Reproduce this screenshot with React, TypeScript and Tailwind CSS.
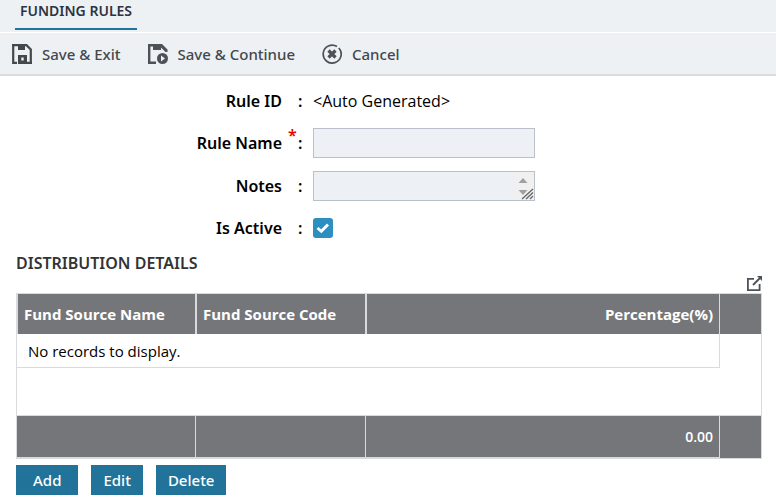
import React from "react";

function SaveExitIcon() {
  return (
    <svg width="20" height="20" viewBox="0 0 20 20" className="shrink-0" aria-hidden="true">
      <path d="M1.2 0V18.8H5M15 18.8H20M0 1.2H14.500L18.8 5.500V18" fill="none" stroke="#43484d" strokeWidth="2.2" />
      <path d="M6 0H13V6H6Z" fill="#43484d" />
      <path d="M6 11H15V20H6Z" fill="#43484d" />
      <path d="M9.300 13.500H11.700V16.500H9.300Z" fill="#eef1f4" />
    </svg>
  );
}

function SaveContinueIcon() {
  return (
    <svg width="20" height="20" viewBox="0 0 20 20" className="shrink-0" aria-hidden="true">
      <path d="M8 18.8H1.2V1.2H6" fill="none" stroke="#4d5258" strokeWidth="2.4" />
      <path d="M5 0H14L19.500 5.500V8H17.500L13 3.500V6H5Z" fill="#4d5258" />
      <circle cx="14.5" cy="14.5" r="5.5" fill="#4d5258" />
      <path d="M13 11.5L17 14.5L13 17.5Z" fill="#eef1f4" />
    </svg>
  );
}

function CancelIcon() {
  return (
    <svg width="20" height="20" viewBox="0 0 20 20" className="shrink-0" aria-hidden="true">
      <path d="M16.8 4A9 9 0 1 1 15 2.5" fill="none" stroke="#4d5258" strokeWidth="1.7" />
      <path d="M6.5 6.5L13.5 13.5M13.5 6.5L6.5 13.5" stroke="#4d5258" strokeWidth="3.2" />
    </svg>
  );
}

function ExportIcon() {
  return (
    <svg width="15" height="15" viewBox="0 0 15 15" aria-hidden="true">
      <path d="M7 2.900H.9V14.1H12.6V8" fill="none" stroke="#4d5258" strokeWidth="1.8" />
      <path d="M6 9L13 2" stroke="#4d5258" strokeWidth="1.8" />
      <path d="M10 0H15V5Z" fill="#4d5258" />
    </svg>
  );
}

function ToolbarButton({ icon, children }: { icon: React.ReactNode; children: React.ReactNode }) {
  return (
    <button type="button" className="flex items-center gap-2.5 text-[15px] leading-5 font-medium text-[#43484d]">
      {icon}
      <span>{children}</span>
    </button>
  );
}

function Field({
  label,
  htmlFor,
  required,
  children,
}: {
  label: string;
  htmlFor?: string;
  required?: boolean;
  children: React.ReactNode;
}) {
  const labelClass = "w-[282px] shrink-0 text-right font-semibold";
  return (
    <div className="flex min-h-7 items-center text-base leading-6">
      {htmlFor ? (
        <label htmlFor={htmlFor} className={labelClass}>
          {label}
        </label>
      ) : (
        <span className={labelClass}>{label}</span>
      )}
      <span className="flex w-[31px] shrink-0 font-semibold">
        <span className="w-4 pl-1.5 leading-2 text-[#e00]">{required ? "*" : ""}</span>
        <span>:</span>
      </span>
      {children}
    </div>
  );
}

function ActionButton({ children, wide }: { children: React.ReactNode; wide?: boolean }) {
  return (
    <button
      type="button"
      className={`h-[30px] bg-[#21739a] text-[15px] leading-5 font-medium text-white ${wide ? "px-[17px]" : "px-3"}`}
    >
      {children}
    </button>
  );
}

export default function App() {
  return (
    <div className="bg-white font-['Noto_Sans','Open_Sans',sans-serif] text-[15px] leading-5 text-black">
      <header className="bg-[#eef1f4]">
        <nav className="flex border-b border-white px-[15px] pb-0.5">
          <a href="#funding" className="border-b-2 border-[#21739a] px-[5px] pt-px pb-[7px] text-sm leading-5 font-semibold text-[#2b3445]">
            FUNDING RULES
          </a>
        </nav>
        <div className="flex h-[43px] items-center gap-[27px] border-b-2 border-[#d9dde1] px-3">
          <ToolbarButton icon={<SaveExitIcon />}>Save &amp; Exit</ToolbarButton>
          <ToolbarButton icon={<SaveContinueIcon />}>Save &amp; Continue</ToolbarButton>
          <ToolbarButton icon={<CancelIcon />}>Cancel</ToolbarButton>
        </div>
      </header>

      <form className="flex flex-col gap-[13px] pt-[11px]">
        <Field label="Rule ID">
          <span className="font-['Open_Sans','Noto_Sans',sans-serif]">&lt;Auto Generated&gt;</span>
        </Field>
        <Field label="Rule Name" htmlFor="rule-name" required>
          <input id="rule-name" type="text" className="h-[30px] w-[222px] border border-[#b9c0cb] bg-[#edf1f5] px-2" />
        </Field>
        <Field label="Notes" htmlFor="notes">
          <span className="relative flex">
            <textarea
              id="notes"
              className="h-[30px] w-[222px] resize-none overflow-hidden border border-[#b9c0cb] bg-[#edf1f5] px-2"
            />
            <svg width="20" height="28" viewBox="0 0 20 28" className="pointer-events-none absolute top-px right-px" aria-hidden="true">
              <path d="M0 0H20V28H0Z" fill="#f0f0f0" />
              <path d="M4.500 11L9 6L13.500 11ZM4.500 18H13.500L9 23Z" fill="#a0a0a0" />
              <path d="M8 27L19 17M12 27L19 20.500M16 27L19 24" stroke="#666" strokeWidth="1.300" />
            </svg>
          </span>
        </Field>
        <Field label="Is Active" htmlFor="is-active">
          <span className="relative flex">
            <input
              id="is-active"
              type="checkbox"
              defaultChecked
              className="peer size-5 appearance-none rounded-[3px] bg-[#9aa3ad] checked:bg-[#2c8fc0]"
            />
            <svg viewBox="0 0 20 20" className="pointer-events-none absolute inset-0 size-5 opacity-0 peer-checked:opacity-100" aria-hidden="true">
              <path d="M4.500 10L8.300 13.300L15 6.500" fill="none" stroke="#fff" strokeWidth="2.800" />
            </svg>
          </span>
        </Field>
      </form>

      <main className="pt-[9px] pr-3.5 pl-4">
        <h2 className="text-base leading-6 font-semibold text-[#333]">DISTRIBUTION DETAILS</h2>
        <div className="flex justify-end pt-px pb-0.5">
          <button type="button" aria-label="Export">
            <ExportIcon />
          </button>
        </div>
        <table className="w-full table-fixed border-separate border-spacing-0 border border-[#d9dadd] text-left font-['Open_Sans','Noto_Sans',sans-serif]">
          <colgroup>
            <col className="w-[179px]" />
            <col className="w-[170px]" />
            <col />
            <col className="w-[41px]" />
          </colgroup>
          <thead>
            <tr className="h-10 bg-[#75767a] font-bold text-white">
              <th className="border-x border-[#d9dadd] px-1.5">Fund Source Name</th>
              <th className="border-x border-[#d9dadd] px-1.5">Fund Source Code</th>
              <th className="border-x border-[#d9dadd] px-1.5 text-right">Percentage(%)</th>
              <th />
            </tr>
          </thead>
          <tbody>
            <tr className="h-[34px]">
              <td colSpan={3} className="border-r border-b border-[#d9dadd] px-[11px]">
                No records to display.
              </td>
              <td />
            </tr>
            <tr className="h-[47px]">
              <td colSpan={4} />
            </tr>
          </tbody>
          <tfoot>
            <tr className="h-[43px] bg-[#75767a] text-sm font-semibold text-white">
              <td className="border-y border-r border-[#d9dadd]" />
              <td className="border-y border-r border-[#d9dadd]" />
              <td className="border-y border-r border-[#d9dadd] px-1.5 text-right">0.00</td>
              <td className="border-t border-[#d9dadd]" />
            </tr>
          </tfoot>
        </table>
        <div className="flex gap-[13px] pt-1.5">
          <ActionButton wide>Add</ActionButton>
          <ActionButton>Edit</ActionButton>
          <ActionButton>Delete</ActionButton>
        </div>
      </main>
    </div>
  );
}
